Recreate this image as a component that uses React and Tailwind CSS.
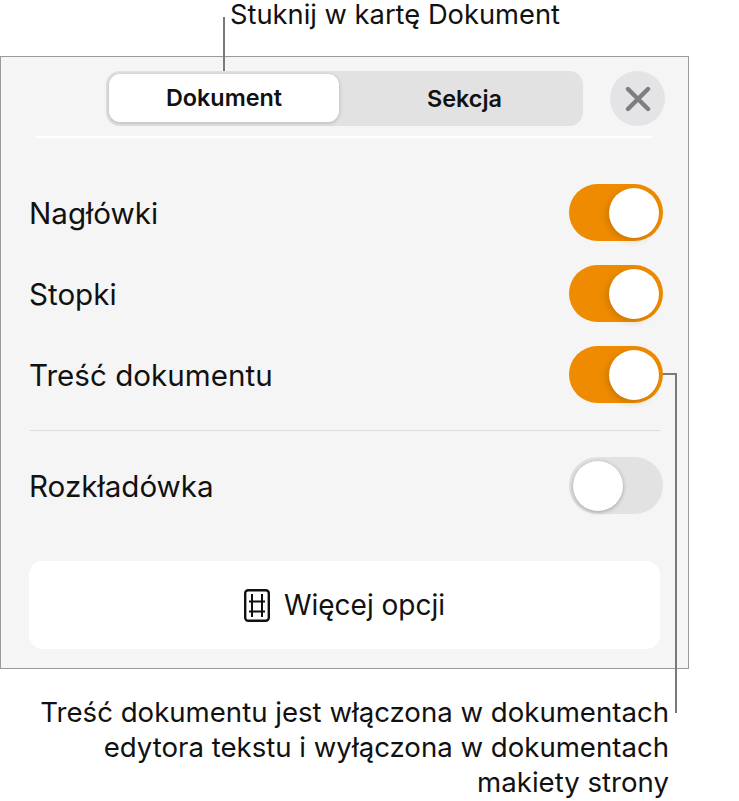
import React from 'react'

function Toggle({ on }) {
    return <div className={`w-[94px] h-[57px] rounded-full flex items-center shrink-0 px-1 ${on ? 'bg-[#ef8b00] justify-end' : 'bg-[#e2e2e2] justify-start'}`}>
        <div className={`w-[50px] h-[50px] rounded-full bg-white ${on ? 'shadow-[-2px_2px_6px_rgba(120,70,0,0.3)]' : 'shadow-[0_1px_4px_rgba(0,0,0,0.3)]'}`}></div>
    </div>
}

function Row({ label, on, className }) {
    return <div className={`flex items-center justify-between pl-[28px] pr-[25px] ${className}`}>
        <span className="pt-[1px]">{label}</span>
        <Toggle on={on} />
    </div>
}

export default function App() {
    return <div className="relative w-[739px] h-[801px] bg-white text-[#111] text-[29.6px] leading-[36px] font-['Inter','Liberation_Sans',sans-serif]">

        <div className="h-[56px] pl-[230px] text-[27.3px] leading-[30px] whitespace-nowrap">Stuknij w kartę Dokument</div>

        <div className="w-[689px] h-[613px] bg-[#f5f5f5] border border-[#9a9a9a] pt-[14px]">

            <div className="flex items-center pl-[105px] pr-[23px]">
                <div className="w-[477px] h-[55px] rounded-[14px] bg-[#e2e2e2] p-[3px] flex text-[23.4px] font-semibold">
                    <div className="w-[230px] h-[48px] rounded-[11px] bg-white shadow-[0_1px_4px_rgba(0,0,0,0.2)] flex items-center justify-center">Dokument</div>
                    <div className="flex-1 flex items-center justify-center pl-[10px]">Sekcja</div>
                </div>
                <div className="ml-auto w-[55px] h-[55px] rounded-full bg-[#e4e4e6] flex items-center justify-center">
                    <svg width="26" height="26" viewBox="0 0 26 26" fill="none" stroke="#7d7d82" strokeWidth="4.4" strokeLinecap="round"><path d="M3 3L23 23M23 3L3 23" /></svg>
                </div>
            </div>

            <div className="h-[2px] bg-white mt-[10px] ml-[35px] mr-[36px] rounded-full"></div>

            <Row label="Nagłówki" on className="mt-[46px]" />
            <Row label="Stopki" on className="mt-[24px]" />
            <Row label="Treść dokumentu" on className="mt-[24px]" />

            <div className="h-[1px] bg-[#dcdcdc] mt-[27px] ml-[29px] mr-[28px]"></div>

            <Row label="Rozkładówka" className="mt-[26px]" />

            <div className="mt-[47px] ml-[28px] mr-[28px] h-[88px] bg-white rounded-[14px] flex items-center justify-center gap-[14px] text-[28px]">
                <svg width="26" height="33" viewBox="0 0 26 33" fill="none" stroke="#111" strokeWidth="2.4"><rect x="1.2" y="1.2" width="23.6" height="30.6" rx="3" /><path d="M8 5V28M18 5V28M5 12.5H21M5 22.5H21" strokeWidth="2" /></svg>
                <span>Więcej opcji</span>
            </div>
        </div>

        <div className="mt-[26px] pr-[70px] text-right text-[27.6px] leading-[35px] whitespace-nowrap">
            Treść dokumentu jest włączona w dokumentach<br />edytora tekstu i wyłączona w dokumentach<br />makiety strony
        </div>

        {/* callout lines */}
        <div className="absolute left-[223px] top-[17px] w-[2px] h-[54px] bg-[#7a7a7a]"></div>
        <div className="absolute left-[663px] top-[373px] w-[14px] h-[340px] border-t-2 border-r-2 border-[#7a7a7a]"></div>
    </div>
}
